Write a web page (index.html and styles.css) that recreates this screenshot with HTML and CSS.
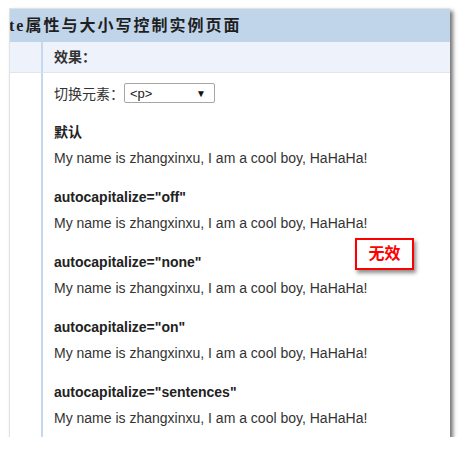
FILE: index.html
```html
<!DOCTYPE html>
<html lang="zh-CN">
<head>
	<meta charset="UTF-8">
	<title>autocapitalize属性与大小写控制实例页面</title>
	<link rel="stylesheet" href="styles.css">
</head>
<body>
	<div class="shot">
		<div class="title"><h1>te属性与大小写控制实例页面</h1></div>
		<div class="table">
			<div class="side side-head"></div>
			<div class="head">效果：</div>
			<div class="side"></div>
			<div class="demo">
				<div class="switch">
					<label for="tag">切换元素：</label>
					<div class="select">
						<span>&lt;p&gt;</span>
						<i>&#9660;</i>
					</div>
				</div>

				<div class="item">
					<h4>默认</h4>
					<p>My name is zhangxinxu, I am a cool boy, HaHaHa!</p>
				</div>
				<div class="item">
					<h4>autocapitalize="off"</h4>
					<p>My name is zhangxinxu, I am a cool boy, HaHaHa!</p>
				</div>
				<div class="item">
					<h4>autocapitalize="none"</h4>
					<p>My name is zhangxinxu, I am a cool boy, HaHaHa!</p>
				</div>
				<div class="item">
					<h4>autocapitalize="on"</h4>
					<p>My name is zhangxinxu, I am a cool boy, HaHaHa!</p>
				</div>
				<div class="item">
					<h4>autocapitalize="sentences"</h4>
					<p>My name is zhangxinxu, I am a cool boy, HaHaHa!</p>
				</div>
			</div>
		</div>
		<div class="stamp">无效</div>
	</div>
</body>
</html>
```
FILE: styles.css
```css
* {
	margin: 0;
	padding: 0;
	box-sizing: border-box;
}

body {
	background-color: #ffffff;
	font-family: Arial, "Liberation Sans", "Noto Sans CJK SC", sans-serif;
	font-size: 14px;
	color: #333333;
}

/* screenshot frame */
.shot {
	position: relative;
	width: 441px;
	height: 429px;
	margin: 8px 0 0 9px;
	border-top: 1px solid #e2e2e2;
	border-left: 1px solid #e2e2e2;
	background-color: #ffffff;
	box-shadow: 3px 3px 4px rgba(0, 0, 0, .55);
	overflow: hidden;
}

.title {
	height: 33px;
	background-color: #c1d5ea;
	overflow: hidden;
}

.title h1 {
	margin-left: -1px;
	font-family: "Liberation Serif", "Noto Sans CJK SC", serif;
	font-size: 16px;
	font-weight: bold;
	letter-spacing: 2px;
	line-height: 33px;
	white-space: nowrap;
	color: #1f1f1f;
}

.table {
	display: grid;
	grid-template-columns: 33px 1fr;
	height: 396px;
	grid-template-rows: 31px 1fr;
}

.side {
	border-right: 2px solid #c6d7ef;
}

.side-head,
.head {
	background-color: #eef2fa;
	border-bottom: 1px solid #e1e5ec;
}

.head {
	padding-left: 11px;
	font-weight: bold;
	line-height: 30px;
	color: #333333;
}

.demo {
	padding: 10px 0 0 11px;
}

.switch {
	display: flex;
	align-items: center;
	height: 20px;
}

.select {
	display: flex;
	align-items: center;
	justify-content: space-between;
	width: 91px;
	height: 20px;
	padding: 0 8px 0 5px;
	border: 1px solid #a6a6a6;
	border-radius: 2px;
	font-size: 13px;
	color: #222222;
}

.select i {
	font-style: normal;
	font-size: 10px;
	color: #111111;
}

.item {
	margin-top: 19px;
}

.item h4 {
	font-size: 14px;
	line-height: 20px;
	color: #222222;
}

.item p {
	margin-top: 6px;
	line-height: 20px;
}

/* red note over the content */
.stamp {
	position: absolute;
	left: 345px;
	top: 229px;
	width: 59px;
	height: 32px;
	border: 2px solid #ff0000;
	background-color: #ffffff;
	box-shadow: 2px 3px 4px rgba(0, 0, 0, .45);
	font-size: 16px;
	font-weight: bold;
	line-height: 28px;
	text-align: center;
	color: #ff0000;
}
```
